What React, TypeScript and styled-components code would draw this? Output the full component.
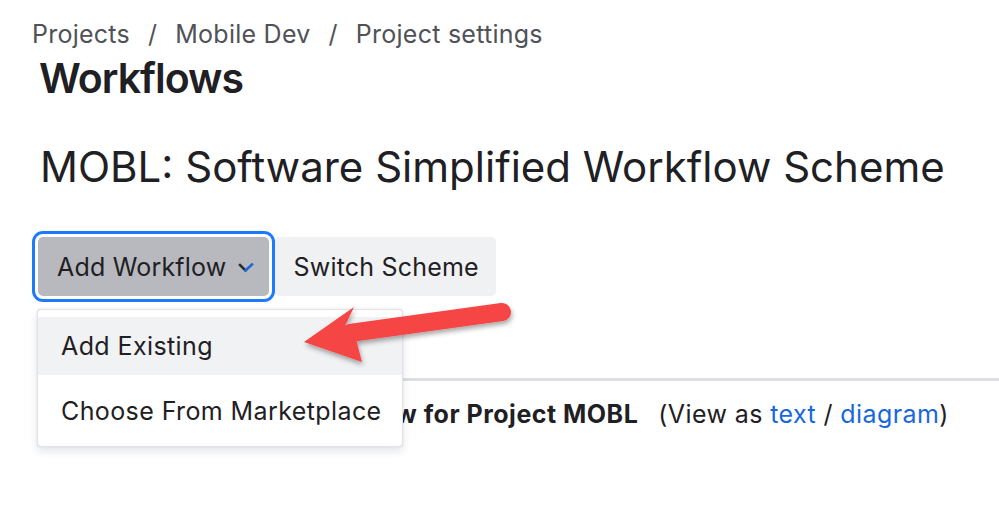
import styled, { createGlobalStyle } from 'styled-components';

const GlobalStyle = createGlobalStyle`
  body {
    margin: 0;
    background: #ffffff;
    font-family: Inter, "Noto Sans", sans-serif;
    color: #1f2024;
  }
`;

function App() {
  return (
    <>
      <GlobalStyle />
      <Page>
        <Breadcrumbs>
          <Crumb>Projects</Crumb>
          <Separator>/</Separator>
          <Crumb>Mobile Dev</Crumb>
          <Separator>/</Separator>
          <Crumb>Project settings</Crumb>
        </Breadcrumbs>

        <Content>
          <PageTitle>Workflows</PageTitle>
          <SchemeTitle>MOBL: Software Simplified Workflow Scheme</SchemeTitle>

          <ButtonRow>
            <MenuAnchor>
              <Button $variant="active">
                Add Workflow
                <Chevron />
              </Button>
              <Dropdown>
                <MenuItem $highlighted>Add Existing</MenuItem>
                <MenuItem $tall>Choose From Marketplace</MenuItem>
              </Dropdown>
            </MenuAnchor>
            <Button $variant="subtle">Switch Scheme</Button>
          </ButtonRow>

          <Divider />

          <WorkflowLine>
            <strong>Software Simplified Workflow for Project MOBL</strong>
            <ViewAs>
              (View as <Link>text</Link> / <Link>diagram</Link>)
            </ViewAs>
          </WorkflowLine>
        </Content>

        <PointerArrow />
      </Page>
    </>
  );
}

// the small two-tone chevron inside the focused button
function Chevron() {
  return (
    <ChevronSvg width="16" height="10" viewBox="0 0 16 10">
      <path d="M2 2 L7.5 7.5" stroke="#2b2c30" strokeWidth="2.6" strokeLinecap="square" fill="none" />
      <path d="M7.5 7.5 L14 1.5" stroke="#1868db" strokeWidth="2.6" strokeLinecap="square" fill="none" />
    </ChevronSvg>
  );
}

// red annotation arrow pointing at "Add Existing"
function PointerArrow() {
  return (
    <ArrowSvg width="999" height="529" viewBox="0 0 999 529">
      <defs>
        <filter id="arrowShadow" x="-10%" y="-30%" width="120%" height="160%">
          <feDropShadow dx="1" dy="3" stdDeviation="2.5" floodColor="#000" floodOpacity="0.35" />
        </filter>
      </defs>
      <g filter="url(#arrowShadow)" fill="#f64545">
        <line x1="350" y1="333" x2="502" y2="312" stroke="#f64545" strokeWidth="18" strokeLinecap="round" />
        <path d="M304 342 L354 307 L344 328 L356 339 L362 362 Z" />
      </g>
    </ArrowSvg>
  );
}

const Page = styled.div`
  position: relative;
  width: 999px;
  height: 529px;
  overflow: hidden;
  padding: 20px 0 0 32px;
  box-sizing: border-box;
`;

const Breadcrumbs = styled.nav`
  display: flex;
  align-items: center;
  gap: 18px;
  font-size: 25px;
  line-height: 29px;
  letter-spacing: 0.25px;
  color: #505258;
`;

const Crumb = styled.span``;

const Separator = styled.span`
  color: #505258;
`;

const Content = styled.div`
  padding-left: 8px;
`;

const PageTitle = styled.h1`
  margin: 4px 0 0 -1px;
  font-size: 41px;
  line-height: 50px;
  font-weight: 600;
  color: #1f2024;
  letter-spacing: -1px;
`;

const SchemeTitle = styled.h2`
  margin: 39px 0 0;
  font-size: 42px;
  line-height: 50px;
  font-weight: 400;
  color: #1f2024;
`;

const ButtonRow = styled.div`
  display: flex;
  align-items: center;
  gap: 5px;
  margin-top: 45px;
  margin-left: -2px;
`;

const MenuAnchor = styled.div`
  position: relative;
  z-index: 2;
`;

const Button = styled.button<{ $variant: 'active' | 'subtle' }>`
  display: flex;
  align-items: center;
  gap: 12px;
  height: 59px;
  padding: 0 16px 0 19px;
  border: none;
  border-radius: 5px;
  font-family: Inter, "Noto Sans", sans-serif;
  font-size: 25px;
  letter-spacing: 0.2px;
  color: #1f2024;
  background: ${(p) => (p.$variant === 'active' ? '#b8b9be' : '#f0f1f3')};
  box-shadow: ${(p) =>
    p.$variant === 'active' ? '0 0 0 3px #ffffff, 0 0 0 6px #1d7afc' : 'none'};
  padding-right: ${(p) => (p.$variant === 'active' ? '15px' : '17px')};
`;

const ChevronSvg = styled.svg`
  display: block;
  margin-top: 2px;
`;

const Dropdown = styled.div`
  position: absolute;
  top: calc(100% + 13px);
  left: -1px;
  width: 364px;
  padding-top: 7px;
  background: #ffffff;
  border: 1px solid #e1e3e7;
  border-radius: 4px;
  box-shadow: 0 4px 8px rgba(9, 30, 66, 0.12), 0 0 1px rgba(9, 30, 66, 0.2);
`;

const MenuItem = styled.div<{ $highlighted?: boolean; $tall?: boolean }>`
  display: flex;
  align-items: center;
  height: ${(p) => (p.$tall ? '71px' : '58px')};
  padding-left: 23px;
  font-size: 25px;
  letter-spacing: 0.4px;
  color: #1f2024;
  background: ${(p) => (p.$highlighted ? '#f1f2f4' : 'transparent')};
`;

const Divider = styled.div`
  height: 3px;
  margin-top: 82px;
  background: #dcdee2;
`;

const WorkflowLine = styled.div`
  margin-top: 19px;
  display: flex;
  gap: 20px;
  font-size: 25px;
  line-height: 28px;
  letter-spacing: 0.4px;
  color: #1f2024;

  strong {
    font-weight: 700;
    letter-spacing: 0.5px;
  }
`;

const ViewAs = styled.span``;

const Link = styled.a`
  color: #1868db;
  text-decoration: none;
`;

const ArrowSvg = styled.svg`
  position: absolute;
  left: 0;
  top: 0;
  pointer-events: none;
  z-index: 5;
`;

export default App;
